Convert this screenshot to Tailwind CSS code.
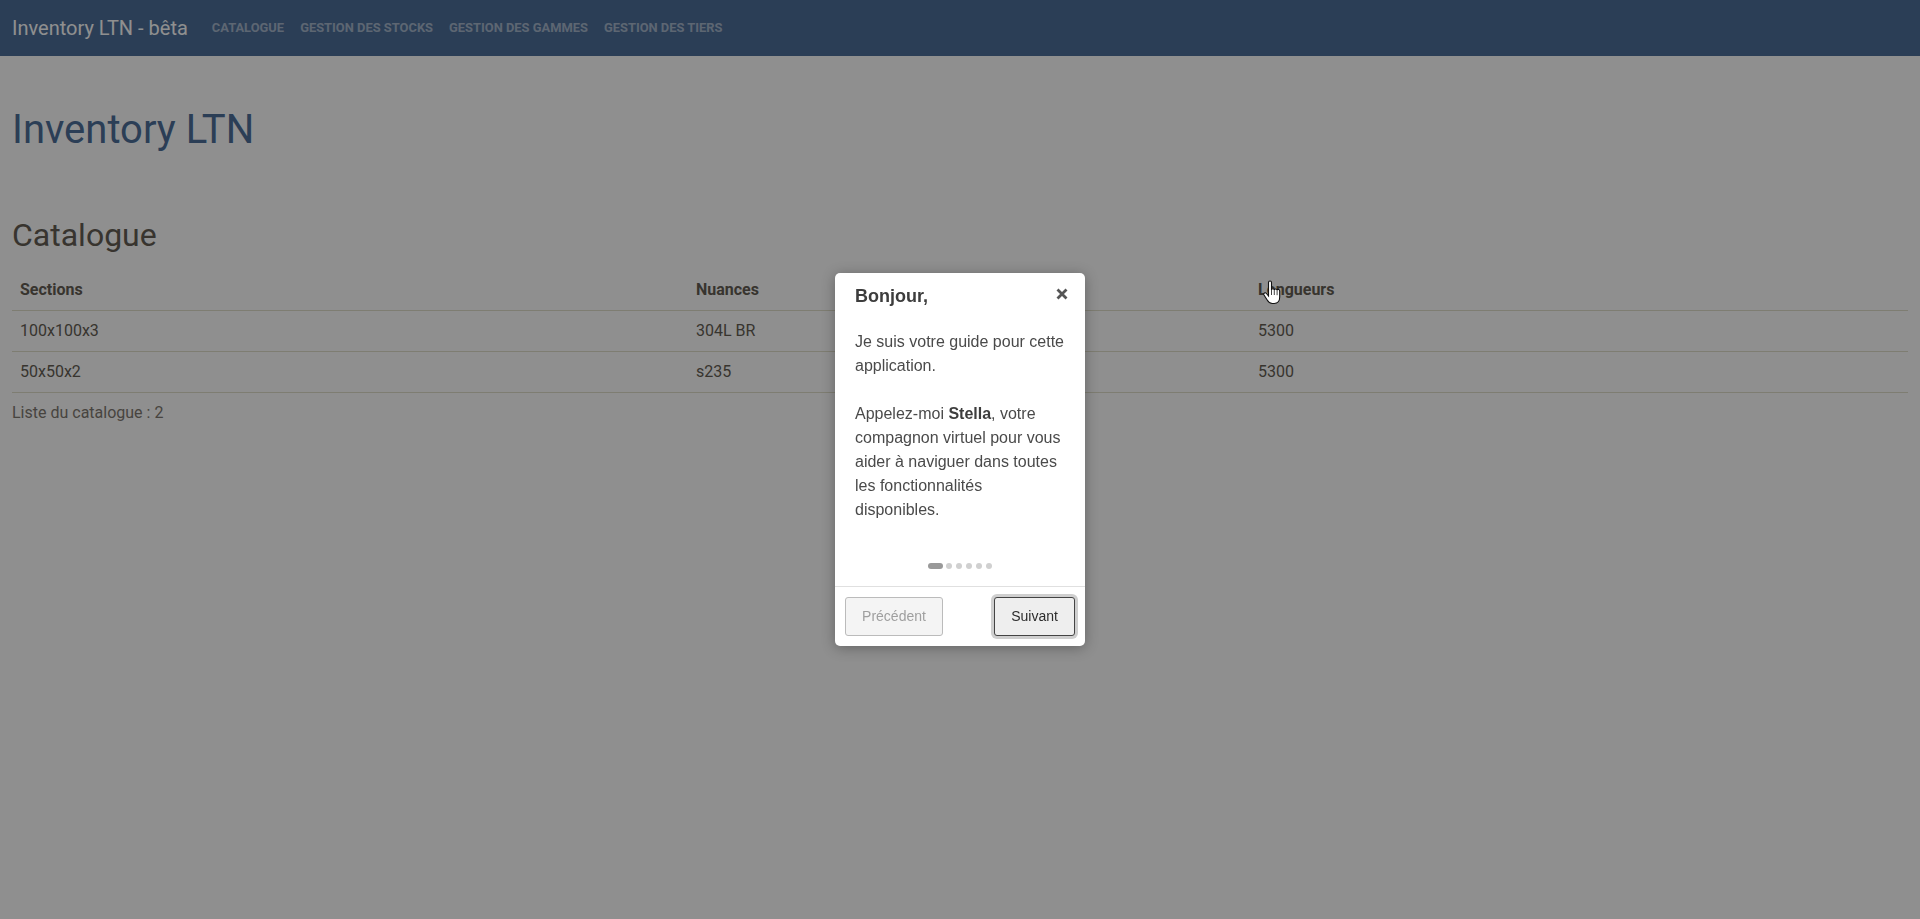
<!DOCTYPE html>
<html lang="fr">
<head>
  <meta charset="UTF-8" />
  <title>Inventory LTN</title>
  <script src="https://cdn.jsdelivr.net/npm/@tailwindcss/browser@4"></script>
</head>
<body class="bg-white font-['Roboto',sans-serif] text-[#645e54] h-[919px] overflow-hidden">

  <!-- Navbar -->
  <nav class="h-14 bg-[#4d6f9a] flex items-center px-3 text-white">
    <a class="text-xl mr-6">Inventory LTN - bêta</a>
    <a class="text-[12.9px] font-bold uppercase text-white/50 mr-4">Catalogue</a>
    <a class="text-[12.9px] font-bold uppercase text-white/50 mr-4">Gestion des stocks</a>
    <a class="text-[12.9px] font-bold uppercase text-white/50 mr-4">Gestion des gammes</a>
    <a class="text-[12.9px] font-bold uppercase text-white/50">Gestion des tiers</a>
  </nav>

  <main class="px-3">
    <h1 class="text-[40px] leading-[48px] text-[#4d6f9a] mt-[50px]">Inventory LTN</h1>
    <h2 class="text-[32px] leading-[38px] mt-[62px]">Catalogue</h2>

    <table class="w-full mt-[17px] text-base">
      <thead>
        <tr class="border-b border-[#e0dfcc] h-[39px] font-bold text-left">
          <th class="pl-2 w-[676px]">Sections</th>
          <th class="pl-2 w-[562px]">Nuances</th>
          <th class="pl-2">Longueurs</th>
        </tr>
      </thead>
      <tbody>
        <tr class="border-b border-[#e0dfcc] h-[41px]">
          <td class="pl-2">100x100x3</td>
          <td class="pl-2">304L BR</td>
          <td class="pl-2">5300</td>
        </tr>
        <tr class="border-b border-[#e0dfcc] h-[41px]">
          <td class="pl-2">50x50x2</td>
          <td class="pl-2">s235</td>
          <td class="pl-2">5300</td>
        </tr>
      </tbody>
    </table>
    <p class="mt-2 text-[#7f7a72]">Liste du catalogue : 2</p>
  </main>

  <!-- Tour overlay -->
  <div class="fixed inset-0 bg-black/44"></div>

  <!-- Cursor -->
  <svg class="absolute left-[1262px] top-[280px] w-[21px] h-[26px]" viewBox="0 0 20 26">
    <path d="M6 2.500c0-2 3-2 3 0v7.500c0-1.600 2.600-1.600 2.800 0 .2-1.400 2.600-1.400 2.800.2.400-1.200 2.600-1 2.600.8v6c0 3.500-2 6.500-5.500 6.500h-2c-2.500 0-3.800-1.500-5-3.500L1.500 15c-1-1.700 1.300-3 2.500-1.500L6 16z" fill="#fff" stroke="#111" stroke-width="1.100" />
    <path d="M9 10v5M11.800 10v5M14.600 10.200v5" stroke="#111" stroke-width=".8" />
  </svg>

  <!-- Tour popover -->
  <div class="absolute left-[835px] top-[273px] w-[250px] h-[373px] bg-white rounded-[5px] shadow-[0_2px_14px_rgba(0,0,0,0.3)] font-['Liberation_Sans',sans-serif] text-[#4a4a4a] flex flex-col">
    <div class="flex-1 pt-[11px] px-5 relative">
      <div class="text-lg leading-[25px] font-bold text-[#3d3d3d]">Bonjour,</div>
      <button class="absolute right-[15px] top-[13px] w-4 h-4 flex items-center justify-center">
        <svg class="w-3 h-3" viewBox="0 0 12 12"><path d="M1.500 1.500l9 9M10.500 1.500l-9 9" stroke="#555" stroke-width="2.800" /></svg>
      </button>
      <div class="mt-[21px] text-base leading-6">
        Je suis votre guide pour cette application.<br /><br />
        Appelez-moi <b class="text-[#3d3d3d]">Stella</b>, votre compagnon virtuel pour vous aider à naviguer dans toutes les fonctionnalités disponibles.
      </div>
    </div>
    <div class="flex justify-center items-center gap-1 h-[6px] mb-[17px]">
      <span class="w-[15px] h-[6px] rounded-full bg-[#999] mr-[-1px]"></span>
      <span class="w-[6px] h-[6px] rounded-full bg-[#d0d0d0]"></span>
      <span class="w-[6px] h-[6px] rounded-full bg-[#d0d0d0]"></span>
      <span class="w-[6px] h-[6px] rounded-full bg-[#d0d0d0]"></span>
      <span class="w-[6px] h-[6px] rounded-full bg-[#d0d0d0]"></span>
      <span class="w-[6px] h-[6px] rounded-full bg-[#d0d0d0]"></span>
    </div>
    <div class="h-[60px] border-t border-[#e0e0e0] flex justify-between items-center px-[10px] pb-px">
      <button class="w-[98px] h-[39px] rounded-[3px] border border-[#bbb] bg-[#f4f4f4] text-sm text-[#9f9f9f]">Précédent</button>
      <button class="w-[81px] h-[39px] rounded-[3px] border border-[#444] bg-[#eee] text-sm text-[#2d2d2d] ring-[3px] ring-[#cfcfcf]">Suivant</button>
    </div>
  </div>
</body>
</html>
